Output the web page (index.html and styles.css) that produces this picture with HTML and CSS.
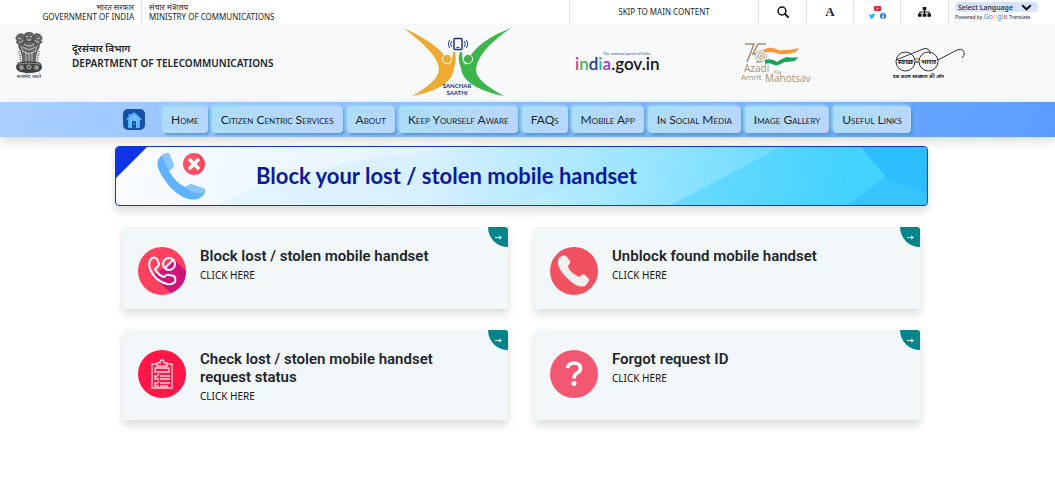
FILE: index.html
```html
<!DOCTYPE html>
<html lang="en">
<head>
<meta charset="utf-8">
<title>Sanchar Saathi - Block your lost / stolen mobile handset</title>
<link rel="stylesheet" href="styles.css">
</head>
<body>
<div class="topbar">
  <div class="org org-left"><span lang="hi">भारत सरकार</span><span>GOVERNMENT OF INDIA</span></div>
  <div class="org"><span lang="hi">संचार मंत्रालय</span><span>MINISTRY OF COMMUNICATIONS</span></div>
  <div class="tools">
    <a class="tool skip" href="#main">SKIP TO MAIN CONTENT</a>
    <button class="tool wide" aria-label="Search"><svg width="12" height="12" viewBox="0 0 12 12"><circle cx="5" cy="5" r="3.9" fill="none" stroke="#111" stroke-width="1.500"/><path d="M8 8l3.200 3.200" stroke="#111" stroke-width="1.800" stroke-linecap="round"/></svg></button>
    <button class="tool letter" aria-label="Text size">A</button>
    <div class="tool social">
      <a href="#" aria-label="YouTube"><svg width="7" height="5" viewBox="0 0 7 5"><rect width="7" height="5" rx="1.3" fill="#e8203f"/><path d="M2.7 1.3v2.4l2-1.2z" fill="#fff"/></svg></a>
      <div class="social-row">
        <a href="#" aria-label="Twitter"><svg width="6" height="6" viewBox="0 0 24 24"><path d="M24 4.6a10 10 0 0 1-2.8.8 5 5 0 0 0 2.1-2.7 10 10 0 0 1-3.1 1.2 4.9 4.9 0 0 0-8.4 4.5A14 14 0 0 1 1.7 3.100a4.900 4.900 0 0 0 1.500 6.600 5 5 0 0 1-2.200-.6 4.900 4.900 0 0 0 3.900 4.900 5 5 0 0 1-2.200.1 4.900 4.900 0 0 0 4.600 3.400A10 10 0 0 1 0 19.500a14 14 0 0 0 7.500 2.200c9.100 0 14.300-7.700 14-14.600A10 10 0 0 0 24 4.600z" fill="#1daef5"/></svg></a>
        <a href="#" aria-label="Facebook"><svg width="6" height="6" viewBox="0 0 12 12"><circle cx="6" cy="6" r="6" fill="#1673e8"/><path d="M5 12V7.500H3.500V5.800H5V4.500c0-1.600 1-2.400 3.200-2.100v1.500c-1-.1-1.400.1-1.400.8v1.100h1.500L8 7.500H6.800V12z" fill="#fff"/></svg></a>
      </div>
    </div>
    <button class="tool wide" aria-label="Sitemap"><svg width="13" height="10" viewBox="0 0 13 10"><g fill="#111"><rect x="4.700" width="3.600" height="3.300" rx=".6"/><rect y="6.500" width="3.600" height="3.300" rx=".6"/><rect x="4.700" y="6.500" width="3.600" height="3.300" rx=".6"/><rect x="9.400" y="6.500" width="3.600" height="3.300" rx=".6"/></g><path d="M6.500 3v4M1.800 7V5h9.400v2" fill="none" stroke="#111"/></svg></button>
    <div class="tool translate">
      <div class="select-wrap">
        <select aria-label="Select Language"><option>Select Language</option></select>
        <svg class="chevron" width="11" height="7" viewBox="0 0 11 7"><path d="M1.200 1.300l4.300 4 4.300-4" fill="none" stroke="#111" stroke-width="2"/></svg>
      </div>
      <div class="powered">Powered by <span class="google"><i class="b">G</i><i class="r">o</i><i class="y">o</i><i class="b">g</i><i class="g">l</i><i class="r">e</i></span> Translate</div>
    </div>
  </div>
</div>

<header class="header">
  <div class="brand">
    <svg width="28" height="48" viewBox="0 0 28 48" role="img" aria-label="National emblem">
      <g fill="#666" stroke="#333" stroke-width=".6">
        <path d="M10 1.500c2-1.500 6-1.500 8 0l1.500 4-1 6-4.500 2-4.500-2-1-6z"/>
        <path d="M8 2C4 1 1 3 .8 7l1.700 1-1.400 2 2.500 2.500L4 16l5 7 3-10zM20 2c4-1 7 1 7.200 5l-1.700 1 1.400 2-2.500 2.500L24 16l-5 7-3-10z"/>
        <path d="M7.500 11c-2 4-1.500 8-.5 12l1 8h12l1-8c1-4 1.500-8-.5-12-3-2-10-2-13 0z"/>
      </g>
      <g fill="none" stroke="#ddd" stroke-width=".8">
        <path d="M11 4.500h2M15 4.500h2M12 7.500q2 2 4 0M3 6l3 1M25 6l-3 1M4 10q3 1 4-2M24 10q-3 1-4-2M9 12q5 4 10 0M8 15q6 5 12 0M8 19q6 5 12 0M11 20v10M14 22v8M17 20v10M6 14l2 6M22 14l-2 6"/>
      </g>
      <path d="M4 19l2 11M24 19l-2 11" stroke="#777" stroke-width="2" stroke-dasharray="1 1"/>
      <path d="M3 31q11-2.500 22 0l1.500 3q.5 4-3.500 5.500-9 2.500-18 0Q1 38 1.500 34z" fill="#444" stroke="#222" stroke-width=".6"/>
      <circle cx="14" cy="35" r="3" fill="#bbb" stroke="#222" stroke-width=".6"/><path d="M11 35h6M14 32v6M12 33l4 4M16 33l-4 4" stroke="#333" stroke-width=".5"/>
      <path d="M4 34l4-1 1 4-4 1zM24 34l-4-1-1 4 4 1z" fill="#999"/>
      <path d="M3 32q11-2 22 0" fill="none" stroke="#ccc" stroke-width=".6"/>
      <text x="14" y="46" text-anchor="middle" font-size="5" fill="#222" lang="hi">सत्यमेव जयते</text>
    </svg>
    <div class="dept"><span lang="hi">दूरसंचार विभाग</span><span>DEPARTMENT OF TELECOMMUNICATIONS</span></div>
  </div>
  <svg class="logo" width="110" height="70" viewBox="0 0 110 70" role="img" aria-label="Sanchar Saathi">
    <path d="M1 0C24 10 43 22 47 37Q50 35 51 24L53 24Q55 32 52 40C51 53 38 63 10 68C26 59 37 50 37 41C36 28 20 14 1 0z" fill="#eeab32"/>
    <path d="M109 0C88 8 70 19 64 37Q60 35 60 24L58 24Q55 32 59 40C60 53 76 63 102 68C86 59 74 51 74 42C75 27 91 12 109 0z" fill="#3cb54a"/>
    <g stroke="#f8f9fb"><circle cx="45" cy="31" r="4.600" fill="#eeab32"/><circle cx="66" cy="31" r="4.600" fill="#3cb54a"/></g>
    <rect x="52" y="10.500" width="8" height="11" rx="1" fill="#fff" stroke="#1b2f87" stroke-width="1.500"/>
    <path d="M54.500 19.500h3" stroke="#1b2f87"/><path d="M49.500 13q-1.500 3 0 6M47.500 12q-2.500 4 0 8M62.500 13q1.500 3 0 6M64.500 12q2.500 4 0 8" fill="none" stroke="#1b2f87" stroke-width=".9"/>
    <g class="lato" font-size="6" font-weight="700" fill="#1b2f87" text-anchor="middle"><text x="55" y="60">SANCHAR</text><text x="55" y="67">SAATHI</text></g>
  </svg>
  <svg class="logo" width="84" height="30" viewBox="0 0 84 30" role="img" aria-label="india.gov.in">
    <text class="lato" x="0" y="22" font-size="17" font-weight="600"><tspan fill="#d43a9d">i</tspan><tspan fill="#47b649">n</tspan><tspan fill="#233a91">d</tspan><tspan fill="#2ab0a0">i</tspan><tspan fill="#a434c7">a</tspan><tspan fill="#151515">.gov.in</tspan></text>
    <text class="lato" x="28" y="7" font-size="4" fill="#3b568d">The national portal of India</text>
  </svg>
  <svg class="logo" width="76" height="42" viewBox="0 0 76 42" role="img" aria-label="Azadi Ka Amrit Mahotsav">
    <path d="M22 8q8-5 15 0 6 1 21-2l-3 4q-12 4-20 1-7-2-13 0z" fill="#f79a3c"/>
    <path d="M26 12q6-1 11 2 8 0 17-3l-3 4q-9 4-16 4-5-4-10-3z" fill="#fff"/>
    <path d="M24 18q7-2 12 2 6-4 10-5 5 1 11 0l-3 4q-7 1-11 1-6 4-10 3-4-3-9-1z" fill="#17a258"/>
    <path d="M4 2h9L6 20M25 2h-8l-5 10q8-2 11 2 1 7-8 6" fill="none" stroke="#a4906c" stroke-width="1.500"/>
    <circle cx="20" cy="14" r="5.500" fill="#f8f9fb" stroke="#a4906c" stroke-dasharray="1 .5"/><circle cx="20" cy="14" r="3" fill="none" stroke="#a4906c" stroke-width="2" stroke-dasharray=".6 .6"/><circle cx="20" cy="14" r="1" fill="#a4906c"/>
    <g class="open" fill="#a4906c"><text x="3" y="30" font-size="10">Azadi</text><text x="33" y="32" font-size="6">Ka</text><text x="0" y="38" font-size="8">Amrit</text><text x="24" y="40" font-size="10">Mahotsav</text></g>
  </svg>
  <svg class="logo" width="74" height="34" viewBox="0 0 74 34" role="img" aria-label="Swachh Bharat">
    <g fill="none" stroke="#333"><circle cx="12.500" cy="15.500" r="9.500"/><circle cx="35.500" cy="15.500" r="9.500"/><path d="M3 14L30 3q7-2 7 5M45 14L62 5q7-4 9 1 1 4-2 6"/></g>
    <path d="M22 13h4" stroke="#f49b32" stroke-width="2"/><path d="M22 16h4" stroke="#39a95b" stroke-width="2"/>
    <g lang="hi" text-anchor="middle" font-weight="700" fill="#222"><text x="12.500" y="18" font-size="7">स्वच्छ</text><text x="35.500" y="18" font-size="7">भारत</text><text x="25" y="32" font-size="5">एक कदम स्वच्छता की ओर</text></g>
  </svg>
</header>

<nav class="nav">
  <a class="home" href="#" aria-label="Home page"><svg width="16" height="16" viewBox="0 0 16 16"><path d="M8 0l8 7-1.200 1.300-.8-.5V16H2V7.800l-.8.5L0 7l2.500-2V2h2v1z" fill="#4da9fb"/><path d="M8 1.500l5 4.300V15H3V5.800z" fill="#6bbcff"/><rect x="6" y="9" width="4" height="7" rx="1" fill="#1451a7"/><path d="M7 12h2" stroke="#4da9fb"/></svg></a>
  <a class="item" href="#">Home</a><a class="item" href="#">Citizen Centric Services</a><a class="item" href="#">About</a><a class="item" href="#">Keep Yourself Aware</a><a class="item" href="#">FAQs</a><a class="item" href="#">Mobile App</a><a class="item" href="#">In Social Media</a><a class="item" href="#">Image Gallery</a><a class="item" href="#">Useful Links</a>
</nav>

<main class="main" id="main">
  <section class="banner">
    <svg class="facets" viewBox="0 0 811 58" preserveAspectRatio="none" aria-hidden="true">
      <path d="M100 58Q220 0 420 0H560L400 58z" fill="#8fdcff" opacity=".13"/>
      <path d="M665 0L555 58H811V0z" fill="#24c9ff" opacity=".32"/>
      <path d="M745 0L770 30 731 58H811V0z" fill="#12a9ff" opacity=".48"/>
      <path d="M770 30L811 47V58H731z" fill="#4bd0ff" opacity=".35"/>
      <path d="M0 0H31L0 31z" fill="#1034e8"/>
    </svg>
    <svg class="phone" width="50" height="50" viewBox="0 0 50 50" aria-hidden="true">
      <path d="M1 9Q5 2 12 2L17 15 12 20Q18 31 28 36L34 33 48 38Q49 44 41 48 28 51 14 37-2 19 1 9z" fill="#60b3fb"/>
      <path d="M5 4Q9 2 12 2L17 14Q17 18 12 19 8 13 5 4zM30 35Q33 32 48 38L45 43Q34 42 29 37z" fill="#88c7fd"/>
      <circle cx="37" cy="13" r="11" fill="#fc5363"/><path d="M39 2.500a11 11 0 0 1 0 21q12-9 0-21z" fill="#e73c56"/>
      <path d="M33 9l8 8m0-8l-8 8" stroke="#fff" stroke-width="3.500" stroke-linecap="round"/>
    </svg>
    <h1>Block your lost / stolen mobile handset</h1>
  </section>

  <div class="cards">
    <a class="card" href="#">
      <svg class="icon" width="48" height="48" viewBox="0 0 48 48" aria-hidden="true"><circle cx="24" cy="24" r="24" fill="#ff415f"/><path d="M37 13L48 24Q48 40 33 46L14 29z" fill="#cf1478"/><path d="M13 12Q16 9 19 12L21 17Q21 19 17 22 20 28 26 30 29 27 31 28L36 29Q38 31 37 35 34 38 29 37 17 34 12 22 10 16 13 12z" fill="none" stroke="#fff" stroke-width="2"/><circle cx="31" cy="17" r="6" fill="none" stroke="#fff" stroke-width="2"/><path d="M27 21l8-8" stroke="#fff" stroke-width="2"/></svg>
      <div><h2>Block lost / stolen mobile handset</h2><p>CLICK HERE</p></div>
      <span class="corner"><svg width="7" height="5" viewBox="0 0 7 5"><path d="M0 2h4V.5L7 2.500 4 4.500V3H0z" fill="#fff"/></svg></span>
    </a>
    <a class="card" href="#">
      <svg class="icon" width="48" height="48" viewBox="0 0 48 48" aria-hidden="true"><circle cx="24" cy="24" r="24" fill="#f05261"/><path d="M9 11Q14 6 17 10L20 14Q21 16 18 19 19 25 29 30 33 26 35 28L39 32Q40 34 35 39 27 42 15 29 5 18 9 11z" fill="#f0efef"/></svg>
      <div><h2>Unblock found mobile handset</h2><p>CLICK HERE</p></div>
      <span class="corner"><svg width="7" height="5" viewBox="0 0 7 5"><path d="M0 2h4V.5L7 2.500 4 4.500V3H0z" fill="#fff"/></svg></span>
    </a>
    <a class="card" href="#">
      <svg class="icon" width="48" height="48" viewBox="0 0 48 48" aria-hidden="true"><circle cx="24" cy="24" r="24" fill="#ff1747"/><g fill="none" stroke="#ffd5de" stroke-width="1.300"><path d="M19 14h-5v24h20V14h-5M17 18h14v4H17zM19 13h3q0-3 2-3t2 3h3v3H19zM22 26h10M22 29h10M22 33h10M22 36h8M17 25v4h4M17 32v4h4M18 27l3-3M18 34l3-3"/></g></svg>
      <div><h2>Check lost / stolen mobile handset request status</h2><p>CLICK HERE</p></div>
      <span class="corner"><svg width="7" height="5" viewBox="0 0 7 5"><path d="M0 2h4V.5L7 2.500 4 4.500V3H0z" fill="#fff"/></svg></span>
    </a>
    <a class="card" href="#">
      <svg class="icon" width="48" height="48" viewBox="0 0 48 48" aria-hidden="true"><circle cx="24" cy="24" r="24" fill="#f25872"/><path d="M17.500 18q1-5 7-5 6 .5 6 5.500 0 3-4 5-2.500 1.500-2.500 5" fill="none" stroke="#fff" stroke-width="3.600"/><circle cx="24" cy="33.500" r="2.500" fill="#fff"/></svg>
      <div><h2>Forgot request ID</h2><p>CLICK HERE</p></div>
      <span class="corner"><svg width="7" height="5" viewBox="0 0 7 5"><path d="M0 2h4V.5L7 2.500 4 4.500V3H0z" fill="#fff"/></svg></span>
    </a>
  </div>
</main>
</body>
</html>
```
FILE: styles.css
```css
* { box-sizing: border-box; }
body { margin: 0; background: #fff; color: #212529; font-family: "Noto Sans", sans-serif; }
a { color: inherit; text-decoration: none; }
button { font: inherit; color: inherit; background: none; border: 0; padding: 0; }
svg { display: block; flex-shrink: 0; }
.lato { font-family: Lato, sans-serif; }
.open { font-family: "Open Sans", sans-serif; }

.topbar { display: flex; height: 24px; font-size: 8px; line-height: 10px; }
.org { display: flex; flex-direction: column; padding: 2px 7px; white-space: nowrap; }
.org-left { width: 142px; text-align: right; border-right: 1px solid #dee2e6; }
.tools { display: flex; margin-left: auto; }
.tools .tool { display: flex; align-items: center; justify-content: center; width: 47px; border-left: 1px solid #dee2e6; }
.tools .wide { width: 48px; }
.tools .skip { width: 189px; }
.tools .letter { font: 700 13px "Liberation Serif", serif; }
.tools .social { flex-direction: column; gap: 2px; }
.social-row { display: flex; gap: 5px; }
.tools .translate { width: 107px; flex-direction: column; align-items: flex-start; padding-left: 6px; }
.select-wrap { position: relative; width: 83px; height: 10px; }
.select-wrap select { appearance: none; display: block; width: 100%; height: 10px; padding: 0 3px; border: 0; border-radius: 4px; background: #d5e4fc; color: #212529; font: 500 7px "Noto Sans", sans-serif; }
.chevron { position: absolute; right: 6px; top: 2px; pointer-events: none; }
.powered { font-size: 5px; line-height: 10px; white-space: nowrap; }
.google { font-size: 7px; }
.google i { font-style: normal; }
.b { color: #4285f4; }
.r { color: #ea4335; }
.y { color: #fbbc05; }
.g { color: #34a853; }

.header { display: grid; grid-template-columns: 402fr 173fr 166fr 152fr 162fr; align-items: center; height: 78px; background: #f8f9fb; }
.brand { display: flex; gap: 29px; padding: 0 0 14px 15px; align-items: center; }
.dept { display: flex; flex-direction: column; font-size: 10px; line-height: 15px; font-weight: 600; white-space: nowrap; }

.nav { display: flex; align-items: center; gap: 4px; height: 35px; padding-left: 123px; background: linear-gradient(120deg, #abcfff, #5b9cff); box-shadow: 0 4px 10px rgba(0,0,0,.15); }
.home { display: flex; align-items: center; justify-content: center; width: 22px; height: 21px; margin-right: 13px; border-radius: 5px; background: #1451a7; }
.item { padding: 0 9px; border-radius: 4px; background: linear-gradient(135deg, #a9dff5, #bcd5ff); box-shadow: 2px 2px 3px #4f9ac9, -2px -2px 4px #9ad1f8; font: 12px/27px Lato, sans-serif; font-variant: small-caps; white-space: nowrap; }

.main { padding: 9px 127px 32px 115px; }
.banner { position: relative; display: flex; align-items: center; gap: 49px; height: 60px; padding-left: 41px; overflow: hidden; border: 1px solid #1034d8; border-radius: 4px; background: linear-gradient(100deg, #fafcff 0%, #e2f4ff 38%, #a8e9ff 60%, #52d5ff 90%); box-shadow: 0 5px 10px rgba(0,0,0,.15); }
.facets { position: absolute; inset: 0; width: 100%; height: 100%; }
.phone, .banner h1 { position: relative; }
.banner h1 { margin: 0; color: #0b1a9a; font: 700 22px/30px Lato, sans-serif; }

.cards { display: grid; grid-template-columns: 1fr 1fr; gap: 21px 27px; padding: 21px 8px; }
.card { position: relative; display: flex; align-items: flex-start; gap: 14px; padding: 20px 48px 14px 15px; min-height: 82px; overflow: hidden; border-radius: 3px; background: #f2f7fa; box-shadow: 0 5px 10px rgba(0,0,0,.15); }
.card h2 { margin: 0 0 1px; font: 600 15px/18px Roboto, sans-serif; }
.card p { margin: 0; font-size: 10px; line-height: 18px; color: #111; }
.cards .card:nth-child(n+3) { min-height: 90px; }
.corner { position: absolute; top: 0; right: 0; display: flex; align-items: center; justify-content: center; width: 20px; height: 20px; border-bottom-left-radius: 20px; background: #04848b; }
```
